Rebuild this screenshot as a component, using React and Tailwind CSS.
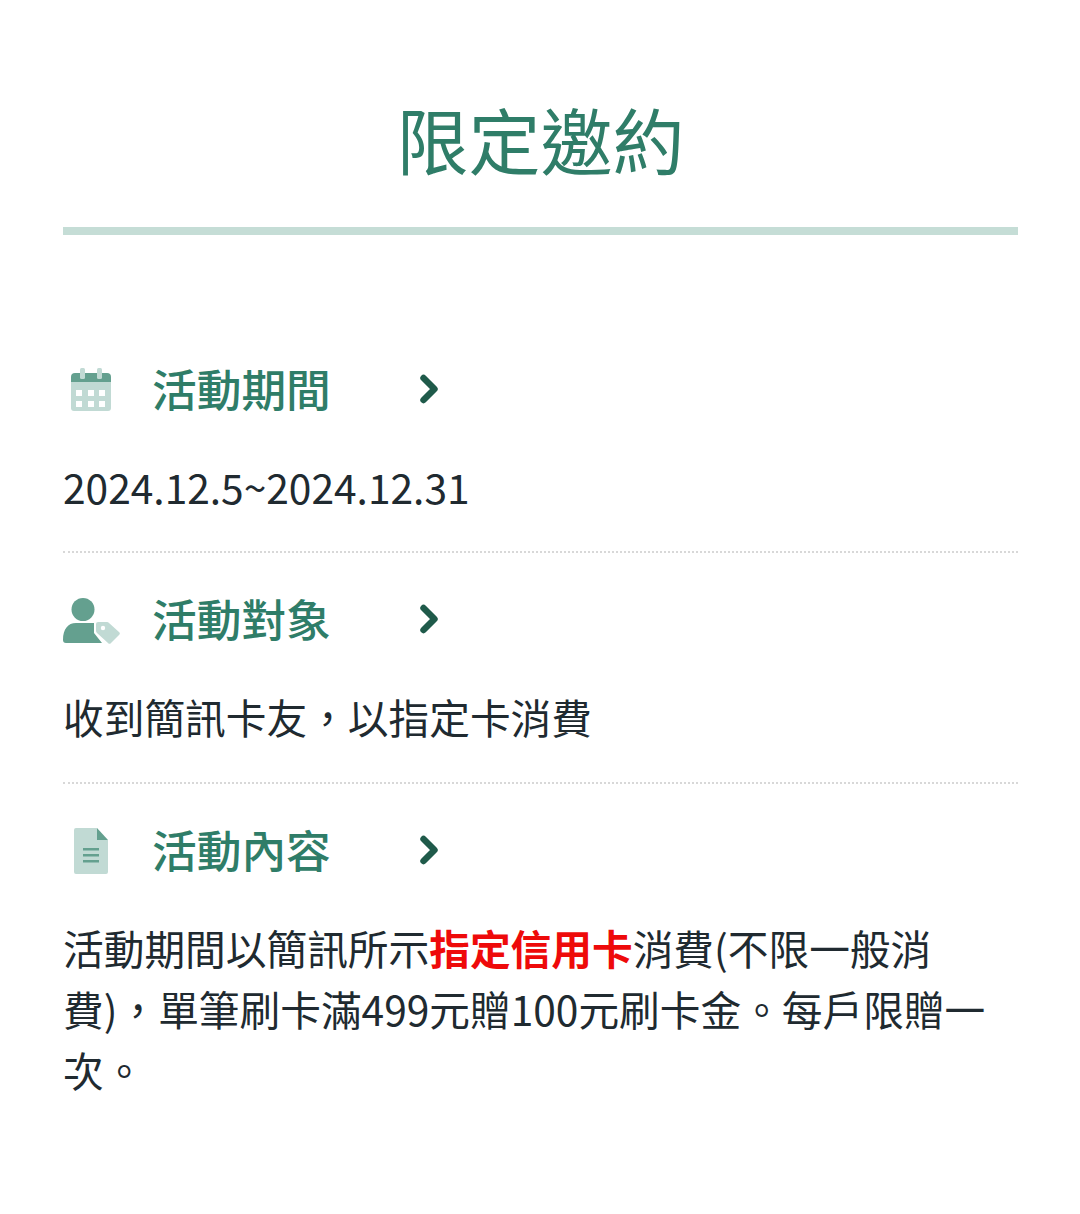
import { ChevronRight } from 'lucide-react';

const CalendarIcon = () => (
  <svg width="58" height="48" viewBox="0 0 58 48">
    <path d="M8 16h40v26a3 3 0 0 1-3 3H11a3 3 0 0 1-3-3z" fill="#c1dad4" />
    <path d="M8 16v-5a4 4 0 0 1 4-4h32a4 4 0 0 1 4 4v5z" fill="#64a08f" />
    <rect x="17" y="2" width="5" height="11" rx="1.5" fill="#c1dad4" />
    <rect x="34" y="2" width="5" height="11" rx="1.5" fill="#c1dad4" />
    <g fill="#fff">
      <rect x="13" y="24" width="6" height="6" />
      <rect x="25" y="24" width="6" height="6" />
      <rect x="36" y="24" width="6" height="6" />
      <rect x="13" y="35" width="6" height="6" />
      <rect x="25" y="35" width="6" height="6" />
      <rect x="36" y="35" width="6" height="6" />
    </g>
  </svg>
);

const PersonIcon = () => (
  <svg width="58" height="48" viewBox="0 0 58 48">
    <circle cx="20" cy="13.5" r="11.5" fill="#64a08f" />
    <path d="M0 44c0-11 5-17 13-17h18v10l8 10H3a3 3 0 0 1-3-3z" fill="#64a08f" />
    <path d="M33 28a2 2 0 0 1 2-2h9a3 3 0 0 1 2 1l10 9a2 2 0 0 1 0 3l-8 8a2 2 0 0 1-3 0l-11-10a3 3 0 0 1-1-2z" fill="#c1dad4" />
    <circle cx="40" cy="32" r="2.2" fill="#fff" />
  </svg>
);

const DocIcon = () => (
  <svg width="58" height="48" viewBox="0 0 58 48">
    <path d="M13 1h21v12h11v32a2 2 0 0 1-2 2H13a2 2 0 0 1-2-2V3a2 2 0 0 1 2-2z" fill="#c1dad4" />
    <path d="M34 1l11 12H34z" fill="#64a08f" />
    <g fill="#64a08f">
      <rect x="20" y="21" width="16" height="2.5" />
      <rect x="20" y="27" width="16" height="2.5" />
      <rect x="20" y="33" width="16" height="2.5" />
    </g>
  </svg>
);

function SectionHead({ icon, title }) {
  return (
    <div className="flex items-center h-12">
      <div className="w-[89px] shrink-0 mt-1">{icon}</div>
      <h2 className="w-[255px] shrink-0 text-[44.7px] leading-none font-medium text-[#2f7d68]">{title}</h2>
      <ChevronRight size={44} strokeWidth={3.5} className="text-[#1f5a4a] shrink-0 translate-y-px" />
    </div>
  );
}

export default function App() {
  return (
    <div
      className="w-[1080px] h-[1214px] bg-white pl-[63px] pr-[62px] text-[#202a30]"
      style={{ fontFamily: '"Noto Sans CJK TC", "Noto Sans", sans-serif' }}
    >
      <h1 className="pt-[93px] pb-[44px] text-center text-[72px] leading-[90px] font-normal text-[#2f7d68]">限定邀約</h1>
      <div className="h-2 bg-[#c5ddd6]" />

      <section className="pt-[129px] pb-[34px] border-b-2 border-dotted border-[#d8d8d8]">
        <SectionHead icon={<CalendarIcon />} title="活動期間" />
        <p className="mt-[44px] text-[40.7px] leading-[61px]">2024.12.5~2024.12.31</p>
      </section>

      <section className="pt-[41px] pb-[35px] border-b-2 border-dotted border-[#d8d8d8]">
        <SectionHead icon={<PersonIcon />} title="活動對象" />
        <p className="mt-[44px] text-[40.7px] leading-[61px]">收到簡訊卡友，以指定卡消費</p>
      </section>

      <section className="pt-[41px]">
        <SectionHead icon={<DocIcon />} title="活動內容" />
        <p className="mt-[44px] text-[40.7px] leading-[61px]">
          活動期間以簡訊所示<strong className="font-bold text-[#ee0a0a]">指定信用卡</strong>消費(不限一般消費)，單筆刷卡滿499元贈100元刷卡金。每戶限贈一次。
        </p>
      </section>
    </div>
  );
}
